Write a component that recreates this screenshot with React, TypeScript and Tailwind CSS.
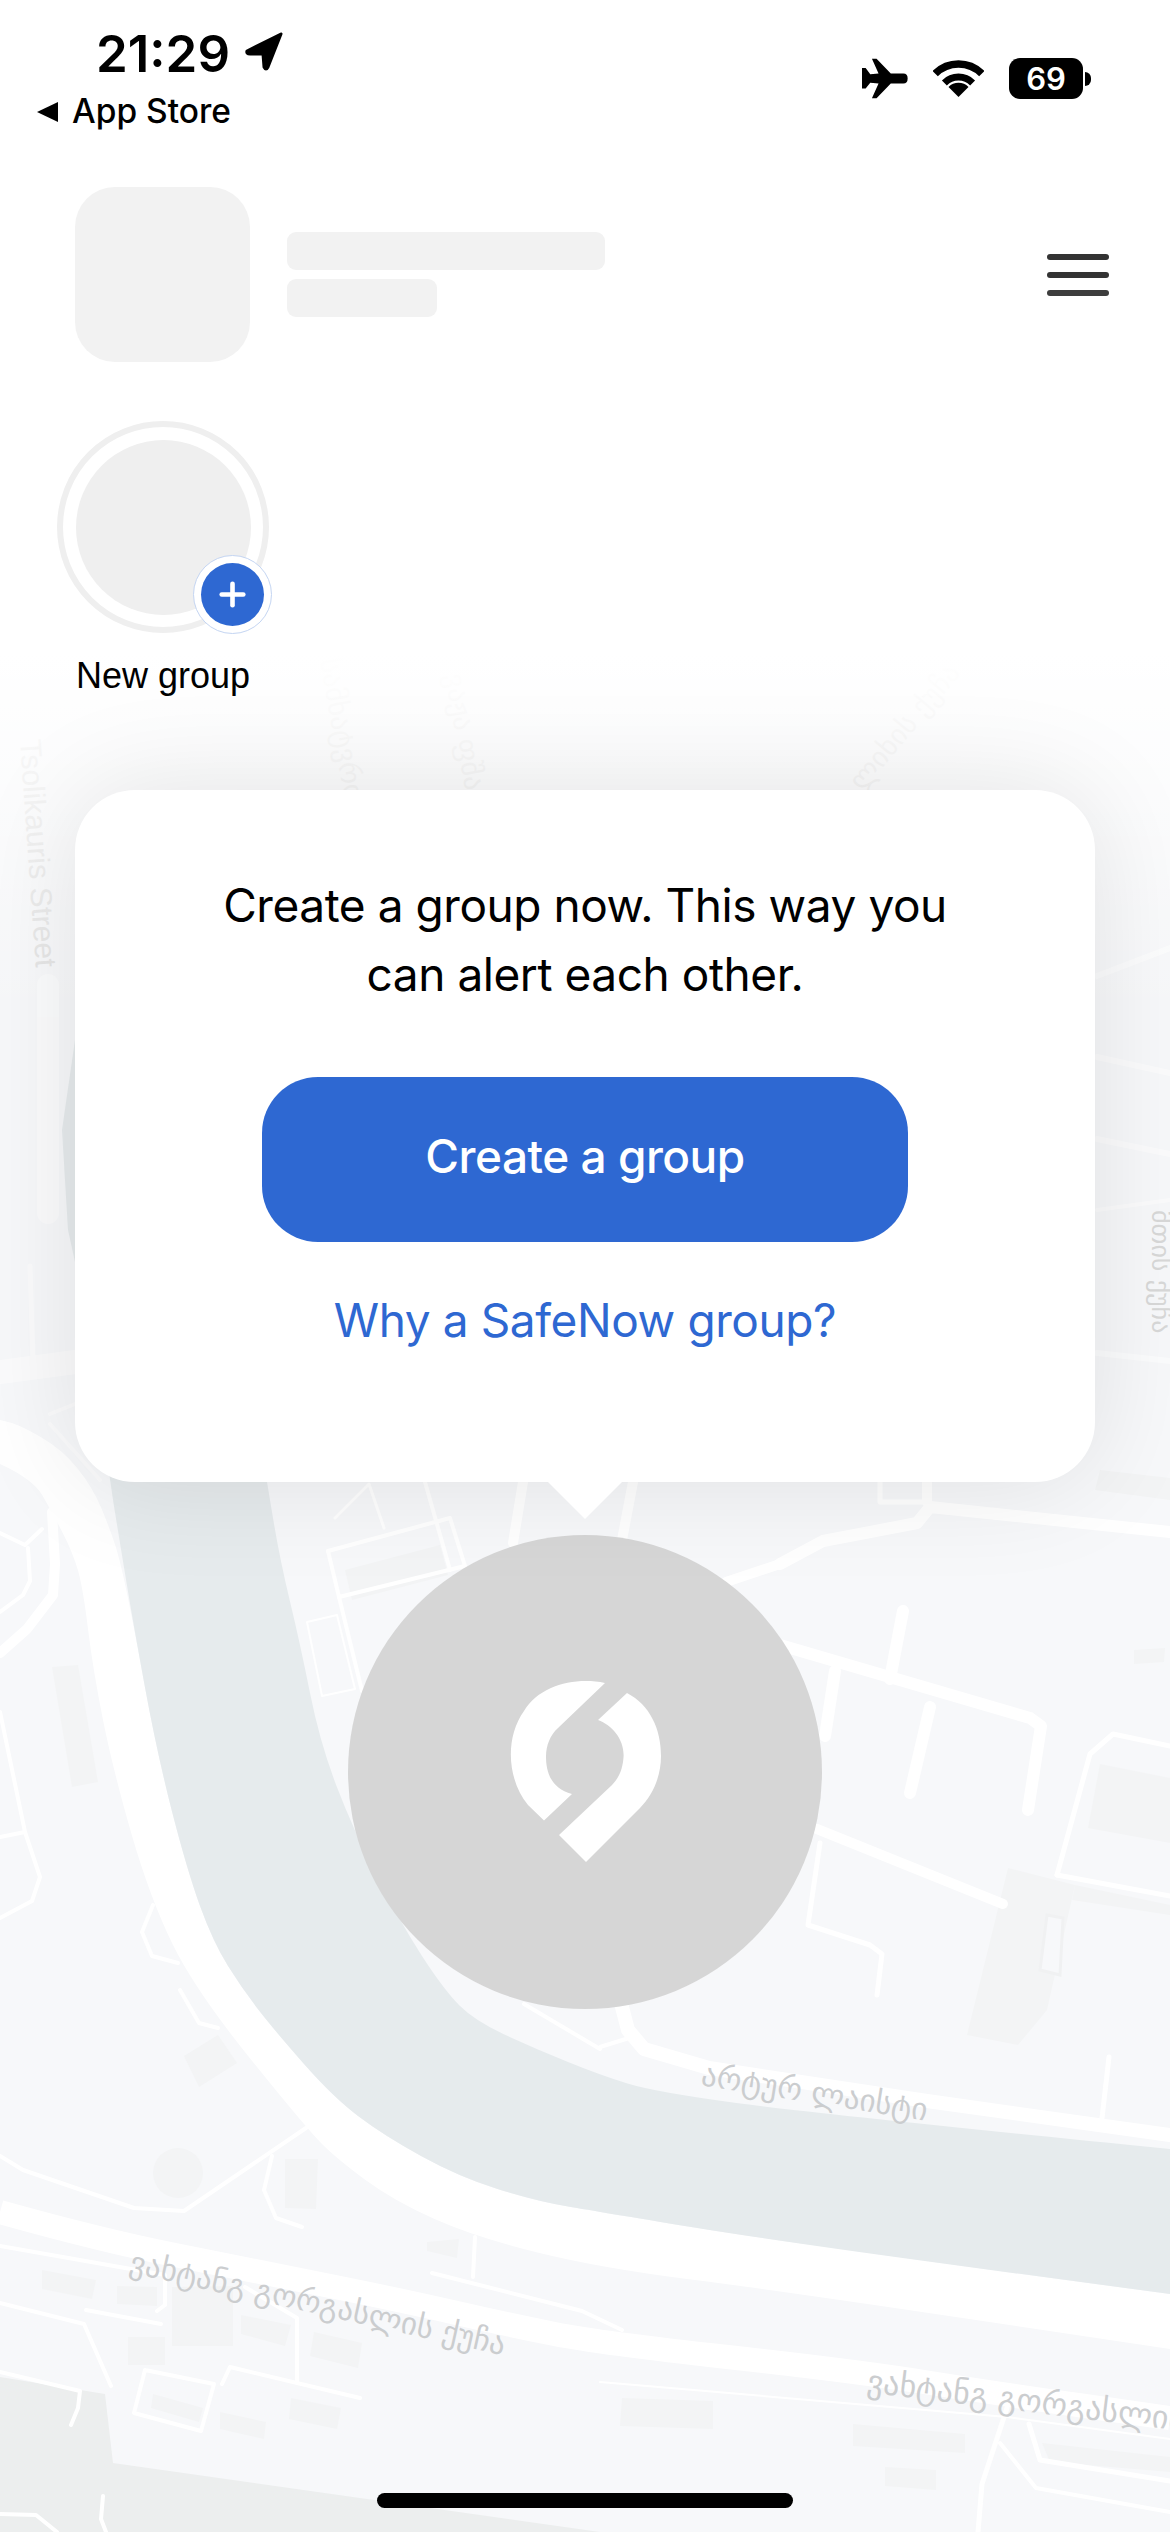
import { Plus } from 'lucide-react'

type Pt = [number, number]

// midpoint-quadratic smoothing for river banks and the big road
const smooth = (pts: Pt[], move = true) => {
  let d = move ? `M${pts[0][0]} ${pts[0][1]}` : `L${pts[0][0]} ${pts[0][1]}`
  for (let i = 1; i < pts.length - 1; i++) {
    const mx = (pts[i][0] + pts[i + 1][0]) / 2
    const my = (pts[i][1] + pts[i + 1][1]) / 2
    d += ` Q${pts[i][0]} ${pts[i][1]} ${mx} ${my}`
  }
  const last = pts[pts.length - 1]
  return d + ` L${last[0]} ${last[1]}`
}

const riverLeft: Pt[] = [[105, 1440], [110, 1482], [120, 1543], [133, 1622], [157, 1753], [187, 1870], [213, 1942], [243, 1990], [275, 2031], [333, 2097], [383, 2135], [459, 2177], [536, 2201], [600, 2212], [782, 2242], [1170, 2294]]
const riverRight: Pt[] = [[1170, 2149], [818, 2114], [655, 2092], [600, 2075], [536, 2049], [475, 2021], [444, 1990], [400, 1922], [353, 1829], [320, 1743], [300, 1643], [280, 1560], [267, 1482], [260, 1440]]
const roadOuter: Pt[] = [[0, 1464], [33, 1479], [52, 1512], [73, 1553], [83, 1588], [93, 1670], [113, 1770], [150, 1898], [195, 1990], [306, 2128], [337, 2159], [394, 2201], [475, 2237], [600, 2268], [782, 2291], [1170, 2349]]
const roadInner: Pt[] = [[1170, 2294], [782, 2242], [600, 2212], [536, 2201], [459, 2177], [383, 2135], [333, 2097], [275, 2031], [243, 1990], [213, 1942], [187, 1870], [157, 1753], [133, 1622], [120, 1560], [110, 1529], [93, 1488], [63, 1450], [20, 1425], [0, 1420]]

const buildings = [
  '52,1667 78,1665 98,1782 72,1787',
  '184,2056 218,2035 237,2063 199,2087',
  '285,2159 318,2159 316,2209 285,2208',
  '427,2242 459,2239 457,2258 427,2251',
  '42,2270 96,2280 92,2299 42,2289',
  '117,2286 157,2287 157,2306 117,2304',
  '172,2287 233,2286 233,2346 172,2346',
  '241,2315 291,2325 285,2346 241,2334',
  '314,2332 362,2343 358,2368 310,2356',
  '128,2337 165,2337 165,2365 128,2365',
  '291,2398 341,2408 337,2429 289,2419',
  '220,2412 266,2422 264,2439 220,2429',
  '153,2394 203,2408 199,2422 151,2408',
  '622,2398 713,2401 713,2429 620,2426',
  '853,2424 965,2434 965,2453 853,2446',
  '885,2467 936,2470 936,2490 885,2486',
  '1042,2443 1170,2457 1170,2472 1050,2462',
  '1008,1868 1075,1885 1047,2010 1018,2045 967,2035',
  '1100,1764 1170,1778 1170,1843 1088,1828',
  '1075,1885 1170,1905 1170,1915 1072,1900',
  '1134,1650 1165,1648 1164,1662 1134,1664',
  '345,1570 440,1545 448,1575 352,1600',
  '1100,1470 1170,1478 1170,1500 1095,1490',
]

// [points, stroke width]
const roads: [string, number][] = [
  ['780,1645 1030,1718 1041,1726 1028,1810', 12],
  ['903,1611 890,1679', 12],
  ['930,1707 910,1793', 12],
  ['835,1671 825,1736', 12],
  ['817,1829 1003,1904', 10],
  ['780,1564 823,1541 917,1523 930,1507 1170,1532', 12],
  ['726,1582 780,1564', 10],
  ['523,1482 513,1543', 10],
  ['633,1482 622,1540', 10],
  ['927,1482 927,1502', 10],
  ['880,1482 880,1502 927,1502', 5],
  ['820,1843 808,1925 870,1945 882,1954 877,1995', 5],
  ['1057,1875 1090,1754 1113,1734 1170,1746', 5],
  ['1057,1875 1170,1896', 5],
  ['328,1551 450,1518 465,1566', 4],
  ['328,1551 339,1597 465,1566', 4],
  ['425,1482 450,1570', 4],
  ['335,1518 369,1484 384,1528', 3],
  ['339,1597 362,1691', 4],
  ['307,1622 337,1615 355,1689 322,1696 307,1622', 2],
  ['52,1512 55,1564 53,1595 27,1629 0,1653', 10],
  ['0,1533 25,1545 42,1529', 4],
  ['28,1548 30,1581 23,1595 0,1612', 4],
  ['0,1712 25,1832 40,1877 32,1901 0,1918', 4],
  ['0,1837 25,1832', 4],
  ['153,1905 142,1932 152,1956 178,1963', 4],
  ['180,1990 199,2023 218,2028', 4],
  ['0,2156 23,2170 134,2208 184,2211 306,2128', 4],
  ['272,2156 264,2190 276,2218 302,2227', 4],
  ['0,2246 165,2275 165,2305 157,2311', 4],
  ['86,2310 161,2324', 4],
  ['0,2303 84,2324 111,2386', 4],
  ['0,2372 80,2391 78,2408 71,2425', 4],
  ['145,2370 214,2384 201,2431 134,2413 145,2370', 4],
  ['222,2384 230,2367 360,2398', 4],
  ['297,2381 297,2318 245,2287', 4],
  ['432,2273 582,2311 622,2330', 4],
  ['475,2237 473,2277', 4],
  ['103,2496 101,2519 106,2532', 4],
  ['0,2514 36,2515 57,2532', 4],
  ['524,2004 600,2049', 4],
  ['600,2047 629,2038', 4],
  ['622,2007 628,2030 644,2049 709,2068 927,2101 1170,2135', 14],
  ['1109,2057 1102,2118', 5],
  ['600,2382 1007,2417 1170,2439', 2],
  ['1007,2408 982,2484 978,2532', 5],
  ['1000,2443 1036,2488 1170,2512', 4],
  ['1029,2424 1040,2460 1170,2481', 5],
]

// strip beside and above the card, mostly faded
const fadedRoads: [string, number][] = [
  ['48,985 48,1213', 22],
  ['30,1266 33,1363', 5],
  ['0,1372 75,1362', 24],
  ['50,1414 75,1404', 4],
  ['50,1424 100,1480', 4],
  ['1097,976 1170,948', 6],
  ['1097,1057 1170,1073', 6],
  ['1097,1139 1170,1154', 6],
  ['1097,1353 1170,1361', 6],
  ['1097,1210 1170,1200', 4],
]

function MapLayer() {
  return (
    <svg className="absolute inset-0" width="1170" height="2532" viewBox="0 0 1170 2532">
      <rect x="0" y="640" width="1170" height="1892" fill="#f7f8fa" />
      <polygon points="0,2377 105,2394 113,2463 600,2532 0,2532" fill="#eceeee" />
      {buildings.map(b => <polygon key={b} points={b} fill="#f3f4f5" />)}
      <circle cx="178" cy="2173" r="25" fill="#f3f4f5" />
      <polygon points="1047,1915 1063,1918 1060,1975 1040,1970" fill="#f7f8fa" stroke="#f0f1f2" strokeWidth="3" />

      <path d={`${smooth(roadOuter)} ${smooth(roadInner, false)} Z`} fill="#ffffff" />
      <path d={`${smooth(riverLeft)} ${smooth(riverRight, false)} Z`} fill="#e6ebed" />
      <polygon points="75,1040 62,1130 68,1230 75,1262" fill="#e6ebed" />

      {/* vakhtang road */}
      <path d={smooth([[0, 2212], [100, 2240], [250, 2270], [400, 2300], [509, 2325], [600, 2343], [855, 2371], [1000, 2394], [1170, 2418]])} fill="none" stroke="#ffffff" strokeWidth="24" />
      {roads.map(([pts, w]) => (
        <polyline key={pts} points={pts} fill="none" stroke="#ffffff" strokeWidth={w} strokeLinecap="round" strokeLinejoin="round" />
      ))}
      <g opacity="0.55">
        {fadedRoads.map(([pts, w]) => (
          <polyline key={pts} points={pts} fill="none" stroke="#ffffff" strokeWidth={w} strokeLinecap="round" strokeLinejoin="round" />
        ))}
      </g>

      <g className="font-['DejaVu_Sans',sans-serif]" fill="#cbcdcf">
        <text x="128" y="2272" fontSize="31" transform="rotate(12.5 128 2272)">ვახტანგ გორგასლის ქუჩა</text>
        <text x="700" y="2085" fontSize="31" transform="rotate(9 700 2085)">არტურ ლაისტი</text>
        <text x="866" y="2392" fontSize="32" transform="rotate(7 866 2392)">ვახტანგ გორგასლის</text>
        <text x="20" y="740" fontSize="30" fill="#e2e2e2" transform="rotate(86 20 740)" className="font-['Liberation_Sans',sans-serif]">Tsolikauris Street</text>
        <text x="320" y="660" fontSize="28" fill="#e4e4e4" transform="rotate(80 320 660)">სამხატვრო</text>
        <text x="445" y="675" fontSize="28" fill="#e4e4e4" transform="rotate(80 445 675)">ვაჟა ფშაველა</text>
        <text x="862" y="792" fontSize="28" fill="#e2e2e2" transform="rotate(-50 862 792)">ლიხის ქუჩა</text>
        <text x="1152" y="1210" fontSize="26" fill="#d8d8d8" transform="rotate(90 1152 1210)">მთის ქუჩა</text>
      </g>
    </svg>
  )
}

function StatusBar() {
  return (
    <div className="flex justify-between items-start h-[187px] pt-[20px] pr-[79px] pl-[37px]">
      <div>
        <div className="flex items-center pl-[59px] gap-[14px] h-[66px]">
          <span className="text-[51px] leading-none font-semibold text-black">21:29</span>
          <svg width="40" height="40" viewBox="0 0 40 40" className="mb-[2px]">
            <path d="M37 2 L3 19 Q2 22 6 22 L19 22 L20 35 Q22 39 24 35 Z" fill="#000" stroke="#000" strokeWidth="3" strokeLinejoin="round" />
          </svg>
        </div>
        <div className="flex items-center gap-[13px] h-[40px] mt-[6px]">
          <svg width="22" height="20" viewBox="0 0 22 20"><path d="M21 0 V20 L0 10 Z" fill="#000" /></svg>
          <span className="text-[33.5px] leading-none font-medium text-black">App Store</span>
        </div>
      </div>
      <div className="flex items-center pt-[37px]">
        <svg width="48" height="43" viewBox="0 0 145 130">
          <path d="M33 5 L47 5 L90 50 L128 50 Q141 50 141 65 Q141 80 128 80 L90 80 L47 125 L33 125 L53 80 L28 78 L14 95 L3 95 L3 33 L14 33 L28 52 L53 50 Z" fill="#000" />
        </svg>
        <svg width="51" height="38" viewBox="0 0 51 38" fill="none" className="ml-[24px]">
          <path d="M2.2 13.7 A33 33 0 0 1 48.8 13.7" stroke="#000" strokeWidth="7.5" />
          <path d="M11.4 22.9 A20 20 0 0 1 39.6 22.9" stroke="#000" strokeWidth="7" />
          <path d="M25.5 37 L15.5 27 A14 14 0 0 1 35.5 27 Z" fill="#000" />
        </svg>
        <div className="ml-[25px] w-[74px] h-[41px] rounded-[11px] bg-black flex items-center justify-center text-white text-[31px] font-semibold leading-none">69</div>
        <div className="ml-[2px] w-[6px] h-[14px] rounded-r-full bg-black" />
      </div>
    </div>
  )
}

export default function App() {
  return (
    <div className="relative w-[1170px] h-[2532px] overflow-hidden bg-white font-['Inter',sans-serif]">
      <MapLayer />
      <div className="absolute top-0 left-0 w-full h-[1020px] bg-gradient-to-b from-white from-[64%] to-transparent" />

      <div className="relative">
        <StatusBar />

        <div className="flex items-center pl-[75px] pr-[61px]">
          <div className="w-[175px] h-[175px] rounded-[40px] bg-[#f2f2f2]" />
          <div className="ml-[37px] flex flex-col gap-[9px] flex-1">
            <div className="w-[318px] h-[38px] rounded-[9px] bg-[#f2f2f2]" />
            <div className="w-[150px] h-[38px] rounded-[9px] bg-[#f2f2f2]" />
          </div>
          <div className="flex flex-col gap-[12px]">
            <div className="w-[62px] h-[6px] rounded-full bg-[#333333]" />
            <div className="w-[62px] h-[6px] rounded-full bg-[#333333]" />
            <div className="w-[62px] h-[6px] rounded-full bg-[#3d3d3d]" />
          </div>
        </div>

        <div className="mt-[59px] ml-[57px] w-[212px]">
          <div className="relative w-[212px] h-[212px] rounded-full border-[6px] border-[#efefef] flex items-center justify-center">
            <div className="w-[175px] h-[175px] rounded-full bg-[#efefef]" />
            <div className="absolute left-[130px] top-[128px] w-[79px] h-[79px] rounded-full bg-white border border-[#c4d5f2] flex items-center justify-center">
              <div className="w-[63px] h-[63px] rounded-full bg-[#2e68d2] flex items-center justify-center">
                <Plus size={37} strokeWidth={3} color="#ffffff" />
              </div>
            </div>
          </div>
          <div className="mt-[21px] text-center text-[36px] leading-[44px] text-black font-['Liberation_Sans',sans-serif]">New group</div>
        </div>

        <div className="relative mt-[92px] ml-[75px] w-[1020px] h-[692px] rounded-[60px] bg-white shadow-[0_0_110px_rgba(0,0,0,0.1)] flex flex-col items-center">
          <p className="mt-[81px] text-center text-[46px] leading-[69px] text-black tracking-[-0.45px]">
            Create a group now. This way you<br />can alert each other.
          </p>
          <button className="mt-[68px] w-[646px] h-[165px] pb-[6px] rounded-[56px] bg-[#2e68d2] text-white text-[46px] font-medium tracking-[-0.5px]">
            Create a group
          </button>
          <div className="mt-[50px] text-[46px] leading-[56px] text-[#2e68d2] tracking-[-0.4px]">Why a SafeNow group?</div>
          <svg className="absolute left-[472px] top-[691px]" width="76" height="39" viewBox="0 0 76 39">
            <path d="M0 0 H76 L38 38 Z" fill="#ffffff" />
          </svg>
        </div>

        <div className="mt-[53px] mx-auto w-[474px] h-[474px] rounded-full bg-[#d6d6d6] flex items-center justify-center">
          <svg width="152" height="182" viewBox="0 0 152 182" className="translate-x-[1px]">
            <path fill="#ffffff" d="M95 2 C65 -4 30 4 14 30 C-6 58 -2 100 18 124 L34 139.5 L62 113 C40 107 36 90 36 75 C36 65 40 54 48 47 Z" />
            <path fill="#ffffff" d="M117 12 C140 24 151 48 151 75 C151 95 143 114 130 127 L76 181 L49 154 L102 104 C110 96 113 86 113.6 75 C114 58 102 44 88 39 Z" />
          </svg>
        </div>
      </div>

      <div className="absolute left-[377px] top-[2493px] w-[416px] h-[15px] rounded-full bg-black" />
    </div>
  )
}
